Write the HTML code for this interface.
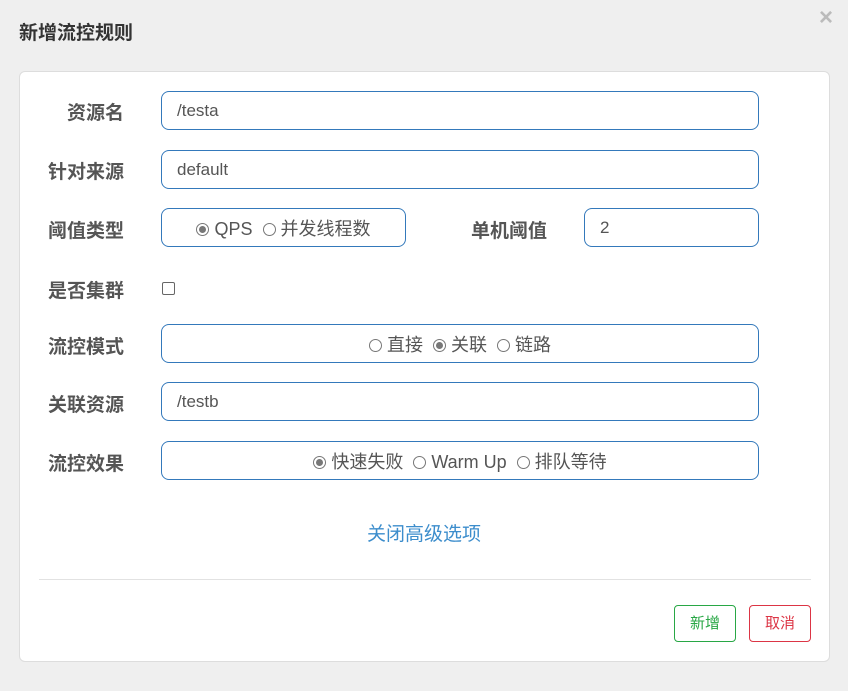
<!DOCTYPE html>
<html><head><meta charset="utf-8"><style>
*{box-sizing:border-box;margin:0;padding:0}
body{width:848px;height:691px;background:#efefef;font-family:"Liberation Sans","Noto Sans CJK SC",sans-serif;position:relative;overflow:hidden;color:#555}
.title{position:absolute;left:19px;top:18px;font-size:19px;font-weight:bold;color:#333}
.close{position:absolute;left:819px;top:4px;font-size:24px;color:#bbb;font-weight:bold}
.card{position:absolute;left:19px;top:71px;width:811px;height:591px;background:#fff;border:1px solid #ddd;border-radius:6px}
.lbl{position:absolute;font-size:19px;font-weight:bold;color:#555;text-align:right;width:120px;left:4px}
.inp{position:absolute;left:161px;width:598px;height:39px;border:1px solid #3479bb;border-radius:8px;font-size:17px;color:#555;padding-left:15px;line-height:37px}
.ctr{text-align:center;padding-left:0;font-size:18px;line-height:41px}
.r{display:inline-block;width:13px;height:13px;border:1px solid #777;border-radius:50%;vertical-align:-1px;margin-right:5px;position:relative;background:#fff}
.r.on::after{content:"";position:absolute;left:2px;top:2px;width:7px;height:7px;border-radius:50%;background:#777}
.sp{margin-right:10px}
.link{position:absolute;left:0;width:848px;text-align:center;top:519px;font-size:19px;color:#3c8dcc}
.hr{position:absolute;left:39px;top:579px;width:772px;height:1px;background:#e2e2e2}
.btn{position:absolute;top:605px;width:62px;height:37px;border-radius:4px;border:1px solid;font-size:15px;text-align:center;line-height:35px;background:#fff}
</style></head><body>
<div class="title">新增流控规则</div>
<div class="close">×</div>
<div class="card"></div>
<div class="lbl" style="top:98px">资源名</div>
<div class="inp" style="top:91px">/testa</div>
<div class="lbl" style="top:157px">针对来源</div>
<div class="inp" style="top:150px">default</div>
<div class="lbl" style="top:216px">阈值类型</div>
<div class="inp ctr" style="top:208px;width:245px"><span class="r on"></span><span class="sp">QPS</span><span class="r"></span>并发线程数</div>
<div class="lbl" style="top:216px;left:427px">单机阈值</div>
<div class="inp" style="top:208px;left:584px;width:175px">2</div>
<div class="lbl" style="top:276px">是否集群</div>
<div style="position:absolute;left:162px;top:282px;width:13px;height:13px;border:1px solid #666;border-radius:2px"></div>
<div class="lbl" style="top:332px">流控模式</div>
<div class="inp ctr" style="top:324px"><span class="r"></span><span class="sp">直接</span><span class="r on"></span><span class="sp">关联</span><span class="r"></span>链路</div>
<div class="lbl" style="top:390px">关联资源</div>
<div class="inp" style="top:382px">/testb</div>
<div class="lbl" style="top:449px">流控效果</div>
<div class="inp ctr" style="top:441px"><span class="r on"></span><span class="sp">快速失败</span><span class="r"></span><span class="sp">Warm Up</span><span class="r"></span>排队等待</div>
<div class="link">关闭高级选项</div>
<div class="hr"></div>
<div class="btn" style="left:674px;color:#28a745;border-color:#28a745">新增</div>
<div class="btn" style="left:749px;color:#dc3545;border-color:#dc3545">取消</div>
</body></html>
